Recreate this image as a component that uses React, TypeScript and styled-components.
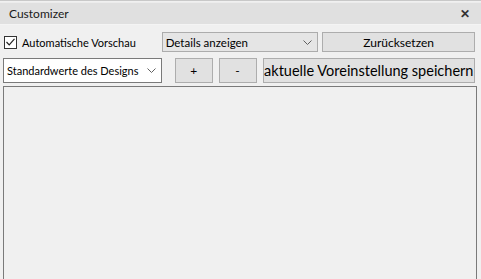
import React from "react";
import styled, { createGlobalStyle } from "styled-components";

const Global = createGlobalStyle`
    html, body {
        margin: 0;
        padding: 0;
        background: #f0f0f0;
        overflow: hidden;
    }
    body {
        font-family: Lato, "Noto Sans", sans-serif;
        font-size: 11px;
        color: #000;
    }
`;

const Window = styled.div`
    display: flex;
    flex-direction: column;
    width: 481px;
    height: 279px;
    border-top: 1px solid #c8c8c8;
    box-sizing: border-box;
    padding-top: 1px;
`;

const TitleBar = styled.div`
    display: flex;
    align-items: center;
    justify-content: space-between;
    height: 21px;
    background: #e0e0e0;
    border-top: 1px solid #ececec;
    border-bottom: 1px solid #f4f4f4;
    padding: 0 8px 0 9px;
    font-size: 12px;
    color: #1a1a1a;
`;

const Close = styled.span`
    font-size: 12px;
    font-weight: 700;
    color: #333;
    line-height: 1;
    margin-right: 3px;
`;

const Row = styled.div<{ $top: number; $height: number }>`
    display: flex;
    align-items: center;
    height: ${(p) => p.$height}px;
    margin-top: ${(p) => p.$top}px;
    padding-right: 6px;
`;

const CheckLabel = styled.label`
    display: flex;
    align-items: center;
    gap: 5px;
    width: 158px;
    padding-left: 4px;
    white-space: nowrap;
    font-size: 11px;
`;

const Box = styled.span`
    display: inline-flex;
    align-items: center;
    justify-content: center;
    width: 11px;
    height: 11px;
    border: 1px solid #333;
    background: #fff;
`;

const Select = styled.div<{ $width: number; $white?: boolean }>`
    display: flex;
    align-items: center;
    justify-content: space-between;
    box-sizing: border-box;
    width: ${(p) => p.$width}px;
    height: 100%;
    padding: 0 5px 0 3px;
    background: ${(p) => (p.$white ? "#fff" : "#e5e5e5")};
    border: 1px solid ${(p) => (p.$white ? "#7a7a7a" : "#acacac")};
    font-size: ${(p) => (p.$white ? 11 : 11.5)}px;
    white-space: nowrap;
    overflow: hidden;
    svg {
        flex-shrink: 0;
    }
`;

const Button = styled.div<{ $width: number; $left: number; $big?: boolean }>`
    display: flex;
    align-items: center;
    justify-content: center;
    box-sizing: border-box;
    width: ${(p) => p.$width}px;
    margin-left: ${(p) => p.$left}px;
    height: 100%;
    background: #e1e1e1;
    border: 1px solid #adadad;
    font-size: ${(p) => (p.$big ? 14.5 : 12)}px;
    white-space: nowrap;
`;

const Panel = styled.div`
    flex: 1;
    margin: 3px 4px 0 3px;
    border: 1px solid #7a7a7a;
    border-bottom: none;
    background: #f0f0f0;
`;

const Chevron = () => (
    <svg width="9" height="5" viewBox="0 0 9 5">
        <path d="M0.5 0.5 L4.5 4.5 L8.5 0.5" fill="none" stroke="#606060" strokeWidth="1" />
    </svg>
);

const App: React.FC = () => {
    return (
        <>
            <Global />
            <Window>
                <TitleBar>
                    <span>Customizer</span>
                    <Close>✕</Close>
                </TitleBar>
                <Row $top={7} $height={20}>
                    <CheckLabel>
                        <Box>
                            <svg width="9" height="8" viewBox="0 0 9 8">
                                <path d="M0.5 4 L3.2 6.8 L8.5 0.8" fill="none" stroke="#222" strokeWidth="1.2" />
                            </svg>
                        </Box>
                        Automatische Vorschau
                    </CheckLabel>
                    <Select $width={157}>
                        <span>Details anzeigen</span>
                        <Chevron />
                    </Select>
                    <Button $width={153} $left={4}>Zurücksetzen</Button>
                </Row>
                <Row $top={6} $height={25}>
                    <div style={{ width: 3 }} />
                    <Select $width={159} $white>
                        <span>Standardwerte des Designs</span>
                        <Chevron />
                    </Select>
                    <Button $width={38} $left={13}>+</Button>
                    <Button $width={38} $left={6}>-</Button>
                    <Button $width={213} $left={6} $big>aktuelle Voreinstellung speichern</Button>
                </Row>
                <Panel />
            </Window>
        </>
    );
};

export default App;
